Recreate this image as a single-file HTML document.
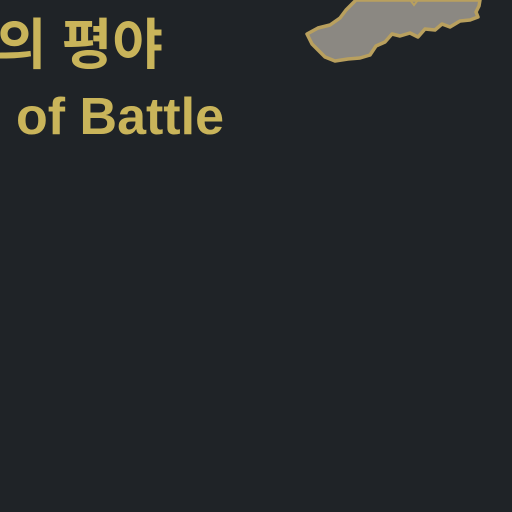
<!DOCTYPE html>
<html><head><style>
html,body{margin:0;padding:0;}
body{width:512px;height:512px;background:#1f2327;position:relative;overflow:hidden;font-family:"Liberation Sans","Noto Sans CJK KR",sans-serif;}
.clip{position:absolute;left:0;top:0;width:512px;height:512px;overflow:hidden;}
.t{position:absolute;color:#c9b45a;font-weight:bold;white-space:nowrap;}
</style></head><body>
<div class="clip">
<div class="t" style="right:349px;top:10px;font-size:55px;line-height:70px;">전장의 평야</div>
<div class="t" style="right:288px;top:86px;font-size:52px;line-height:62px;">Fields of Battle</div>
</div>
<svg width="512" height="512" style="position:absolute;left:0;top:0">
<path d="M307,34 L318,28 L330,25 L340,18 L346,10 L352,4 L356,0 L480,0 L479,6 L476,12 L478,17 L470,20 L460,21 L450,27 L442,24 L435,30 L425,29 L418,37 L410,33 L400,36 L392,34 L385,42 L376,46 L370,55 L360,58 L348,59 L335,61 L325,57 L318,50 L312,44 Z" fill="#8b8882" stroke="#b9a05e" stroke-width="3.5" stroke-linejoin="round"/>
<path d="M410,0 L414,5 L418,0" fill="none" stroke="#b9a05e" stroke-width="2"/>
</svg>
</body></html>
